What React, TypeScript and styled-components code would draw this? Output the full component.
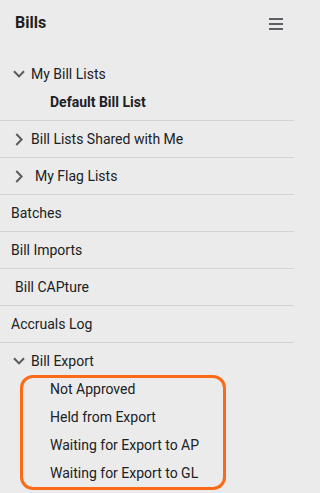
import React from "react";
import styled, { createGlobalStyle } from "styled-components";

const GlobalStyle = createGlobalStyle`
  html, body {
    margin: 0;
    padding: 0;
    background: #ebebeb;
  }
  body {
    font-family: Roboto, "Noto Sans", Arial, sans-serif;
    color: #202124;
    -webkit-font-smoothing: antialiased;
  }
`;

const Sidebar = styled.nav`
  width: 294px;
  height: 493px;
  background: #ebebeb;
  overflow: hidden;
  box-sizing: border-box;
`;

const Header = styled.header`
  height: 46px;
  display: flex;
  align-items: center;
  justify-content: space-between;
  padding: 0 11px 0 15px;
`;

const Title = styled.h1`
  margin: 0;
  font-size: 16px;
  line-height: 20px;
  font-weight: 700;
  color: #1f1f22;
`;

const MenuButton = styled.button`
  width: 16px;
  height: 16px;
  padding: 0;
  border: 0;
  background: transparent;
  display: flex;
  flex-direction: column;
  justify-content: space-between;
  align-items: flex-end;
  padding: 2px 0 1px;
  box-sizing: border-box;
  height: 15px;
  margin-top: 1px;
`;

const MenuBar = styled.span`
  display: block;
  width: 14px;
  height: 2px;
  background: #5e5f64;
`;

const Group = styled.section<{ $top?: number; $bottom?: number }>`
  padding-top: ${(p) => p.$top ?? 0}px;
  padding-bottom: ${(p) => p.$bottom ?? 0}px;
  border-bottom: 1px solid #d3d3d3;
`;

const OpenGroup = styled.section<{ $top?: number }>`
  padding-top: ${(p) => p.$top ?? 0}px;
`;

const Row = styled.div<{ $height: number; $left: number; $gap?: number }>`
  display: flex;
  align-items: center;
  height: ${(p) => p.$height}px;
  padding-left: ${(p) => p.$left}px;
  gap: ${(p) => p.$gap ?? 0}px;
  font-size: 14px;
  line-height: 20px;
  white-space: nowrap;
`;

const ItemRow = styled(Row)`
  border-bottom: 1px solid #d3d3d3;
`;

const Label = styled.span<{ $bold?: boolean }>`
  font-weight: ${(p) => (p.$bold ? 700 : 400)};
  color: #202124;
`;

const SubList = styled.div`
  position: relative;
`;

const Highlight = styled.div`
  position: absolute;
  left: 20px;
  top: 0;
  width: 206px;
  height: 115px;
  border: 3px solid #fa6a17;
  border-radius: 13px;
  box-sizing: border-box;
  pointer-events: none;
`;

const IconBox = styled.svg`
  display: block;
  flex: none;
`;

const ChevronDown = () => (
  <IconBox width="12" height="8" viewBox="0 0 12 8">
    <polyline
      points="1,1.2 6,6.4 11,1.2"
      fill="none"
      stroke="#57595f"
      strokeWidth="2"
    />
  </IconBox>
);

const ChevronRight = () => (
  <IconBox width="8" height="13" viewBox="0 0 8 13">
    <polyline
      points="1.3,1 6.6,6.5 1.3,12"
      fill="none"
      stroke="#5d5a5c"
      strokeWidth="2"
    />
  </IconBox>
);

const exportItems = [
  "Not Approved",
  "Held from Export",
  "Waiting for Export to AP",
  "Waiting for Export to GL",
];

const plainItems: { label: string; left: number }[] = [
  { label: "Batches", left: 11 },
  { label: "Bill Imports", left: 11 },
  { label: "Bill CAPture", left: 15 },
  { label: "Accruals Log", left: 11 },
];

export default function App() {
  return (
    <>
      <GlobalStyle />
      <Sidebar>
        <Header>
          <Title>Bills</Title>
          <MenuButton aria-label="Menu">
            <MenuBar />
            <MenuBar />
            <MenuBar />
          </MenuButton>
        </Header>

        <Group $top={14} $bottom={4}>
          <Row $height={28} $left={13} $gap={6}>
            <ChevronDown />
            <Label>My Bill Lists</Label>
          </Row>
          <Row $height={28} $left={50}>
            <Label $bold>Default Bill List</Label>
          </Row>
        </Group>

        <ItemRow $height={36} $left={15} $gap={8}>
          <ChevronRight />
          <Label>Bill Lists Shared with Me</Label>
        </ItemRow>
        <ItemRow $height={36} $left={15} $gap={12}>
          <ChevronRight />
          <Label>My Flag Lists</Label>
        </ItemRow>

        {plainItems.map((it) => (
          <ItemRow key={it.label} $height={36} $left={it.left}>
            <Label>{it.label}</Label>
          </ItemRow>
        ))}

        <OpenGroup $top={4}>
          <Row $height={28} $left={13} $gap={6}>
            <ChevronDown />
            <Label>Bill Export</Label>
          </Row>
          <SubList>
            {exportItems.map((t) => (
              <Row key={t} $height={28} $left={50}>
                <Label>{t}</Label>
              </Row>
            ))}
            <Highlight />
          </SubList>
        </OpenGroup>
      </Sidebar>
    </>
  );
}
